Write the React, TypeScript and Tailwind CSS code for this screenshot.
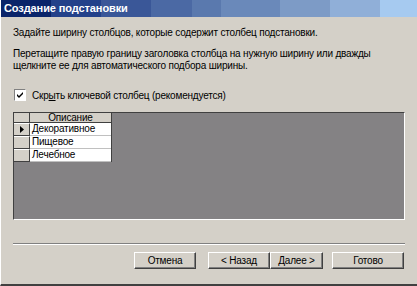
import { useState } from 'react';

const rows = ['Декоративное', 'Пищевое', 'Лечебное'];

const buttons = [
  { label: 'Отмена', size: 'w-[62px] mr-[12px]' },
  { label: '< Назад', size: 'w-[62px]' },
  { label: 'Далее >', size: 'w-[53px] mr-[9px]' },
  { label: 'Готово', size: 'w-[72px]' },
];

export default function App() {
  const [hideKey, setHideKey] = useState(true);

  return (
    <div
      className="w-[417px] h-[286px] bg-[#d4d0c8] flex flex-col border-l border-white border-b-2 border-b-[#404040] overflow-hidden text-black text-[10px]"
      style={{ fontFamily: '"Liberation Sans", Arial, sans-serif' }}
    >
      {/* заголовок окна */}
      <div className="h-[17px] shrink-0 flex items-center pl-[3px] bg-[linear-gradient(90deg,#0a246a_0%,#0a246a_12%,#23418a_12%,#23418a_24%,#3a5798_24%,#3a5798_36%,#4b69a4_36%,#4b69a4_46%,#5a79ae_46%,#5a79ae_53%,#6a89ba_53%,#6a89ba_67%,#7d9bc6_67%,#7d9bc6_79%,#90afd8_79%,#90afd8_91%,#a6caf0_91%)]">
        <span className="text-white font-bold text-[11px] tracking-[-0.1px]">Создание подстановки</span>
      </div>

      <div className="flex-1 flex flex-col px-[12px] pt-[10px] tracking-[-0.2px]">
        <p className="leading-[12px]">Задайте ширину столбцов, которые содержит столбец подстановки.</p>
        <p className="leading-[12px] mt-[9px]">
          Перетащите правую границу заголовка столбца на нужную ширину или дважды
          <br />
          щелкните ее для автоматического подбора ширины.
        </p>

        <label className="flex items-center gap-[6px] mt-[17px] ml-[1px] h-[12px]">
          <span
            onClick={() => setHideKey(!hideKey)}
            className="w-[12px] h-[12px] bg-white border border-t-[#808080] border-l-[#808080] border-r-white border-b-white flex items-center justify-center"
          >
            {hideKey && (
              <svg width="7" height="7" viewBox="0 0 7 7">
                <path d="M0 2 L2 4 L6 0 L6 2 L2 6 L0 4 Z" fill="#000" />
              </svg>
            )}
          </span>
          <span>
            Скр<u>ы</u>ть ключевой столбец (рекомендуется)
          </span>
        </label>

        {/* сетка данных */}
        <div className="mt-[11px] h-[108px] bg-[#848284] border border-t-[#404040] border-l-[#404040] border-r-white border-b-white">
          <div className="w-[98px] bg-white border-r border-[#404040]">
            <div className="flex h-[10px] bg-[#d4d0c8] border-b border-[#404040]">
              <div className="w-[16px] border-r border-[#404040]" />
              <div className="flex-1 flex items-center justify-center leading-none text-[10px]">Описание</div>
            </div>
            {rows.map((r, i) => (
              <div key={r} className="flex h-[13px]">
                <div className="w-[16px] bg-[#d4d0c8] border-r border-b border-[#404040] border-t border-t-white flex items-center justify-center">
                  {i === 0 && (
                    <svg width="4" height="7" viewBox="0 0 4 7">
                      <path d="M0 0 L4 3.5 L0 7 Z" fill="#000" />
                    </svg>
                  )}
                </div>
                <div className="flex-1 pl-[2px] leading-[12px] border-b border-[#c0c0c0]">{r}</div>
              </div>
            ))}
          </div>
        </div>

        <div className="mt-[23px] border-t border-[#808080] border-b border-b-white" />

        <div className="flex justify-end mt-[7px] mr-[1px]">
          {buttons.map((b) => (
            <button
              key={b.label}
              className={`h-[17px] ${b.size} bg-[#d4d0c8] border border-t-white border-l-white border-r-[#404040] border-b-[#404040] shadow-[inset_-1px_-1px_0_#808080] text-[10px] leading-none`}
            >
              {b.label}
            </button>
          ))}
        </div>
      </div>
    </div>
  );
}
